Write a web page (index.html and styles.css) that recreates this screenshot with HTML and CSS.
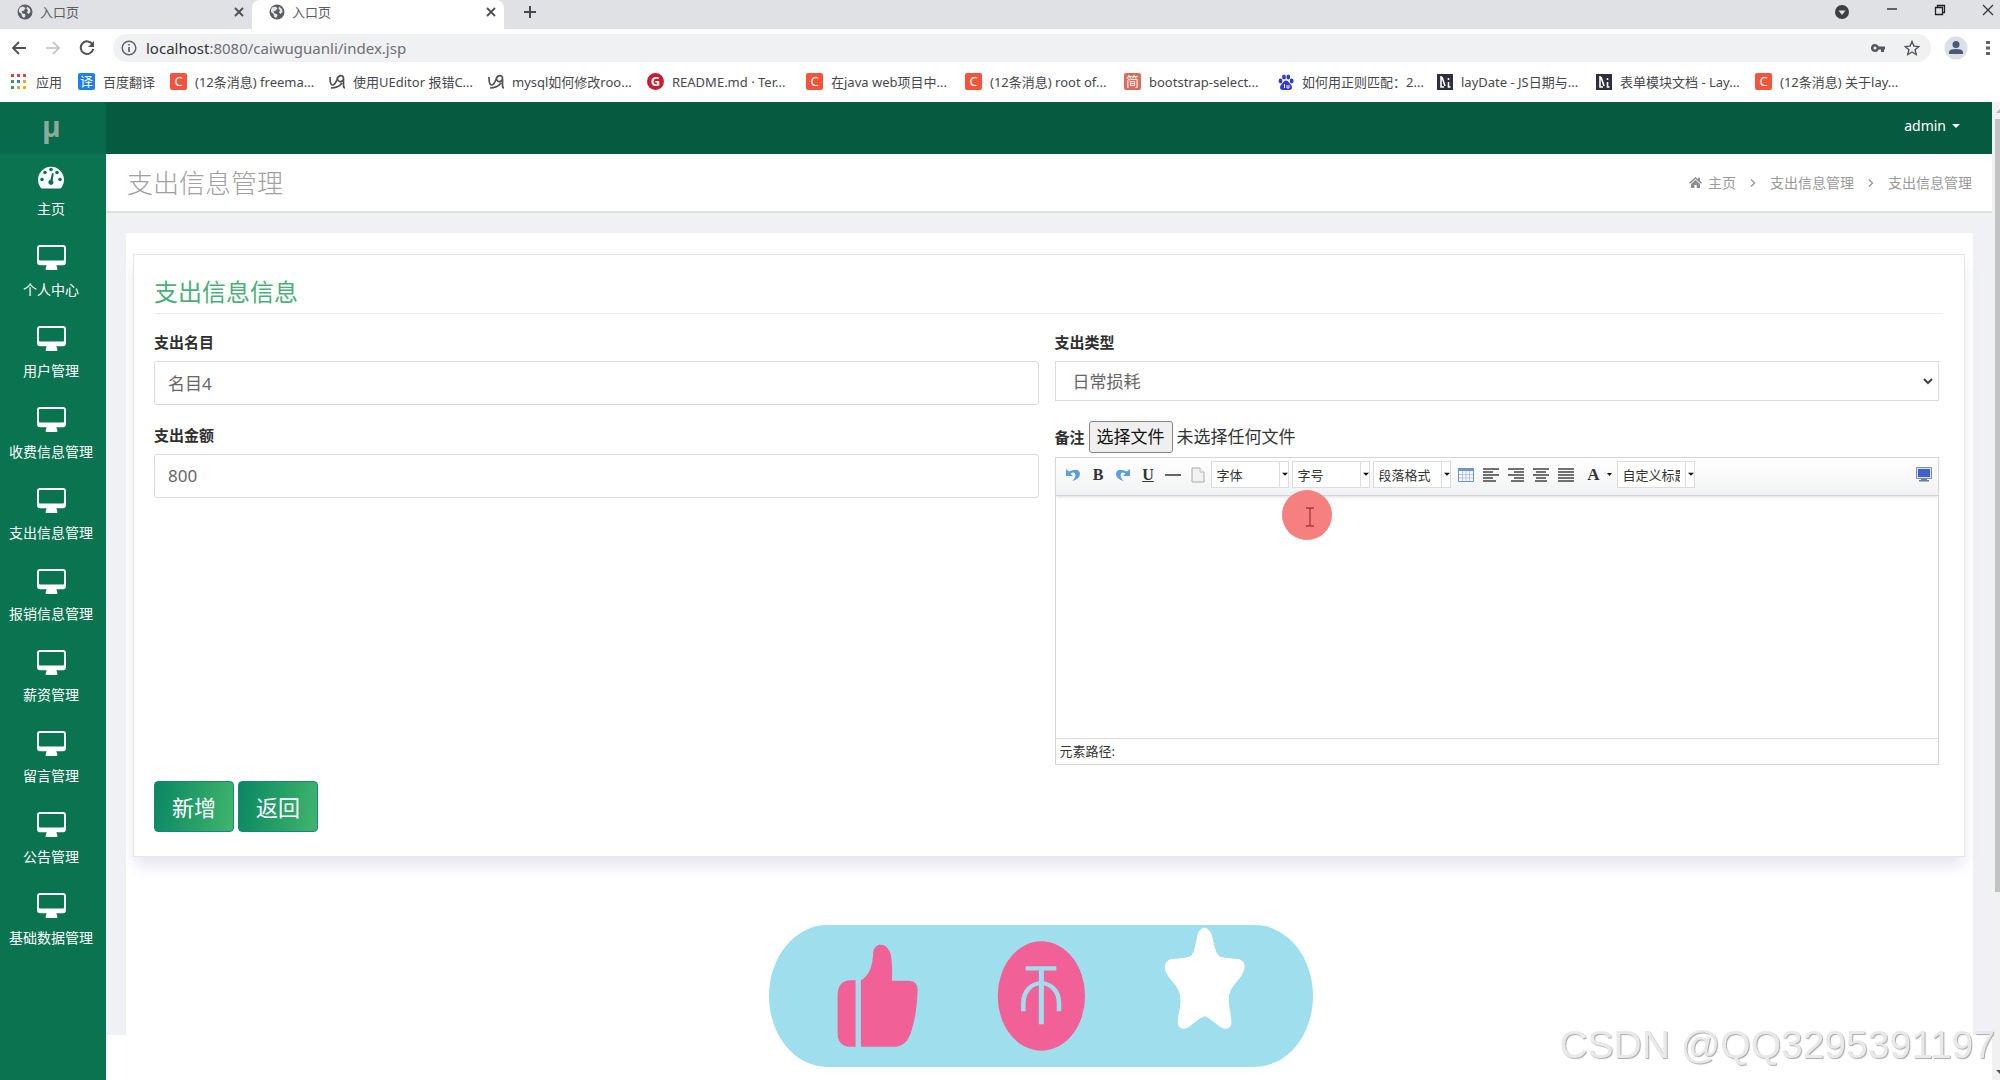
FILE: index.html
```html
<!DOCTYPE html>
<html lang="zh-CN">
<head>
<meta charset="utf-8">
<title>入口页</title>
<link rel="stylesheet" href="styles.css">
</head>
<body>
<svg class="defs" aria-hidden="true">
  <symbol id="globe" viewBox="0 0 16 16"><circle cx="8" cy="8" r="7.5" fill="#5a5d61"/><path d="M3 3.500L6 2.500 8.500 4 7 6.500 4.500 7.500 5.500 9.500 8 10 8.500 12 7 14 5 12.500 4.500 10 2 8 2 5.500zM10 2.500L13 5 13.500 8 11.500 10 10 8.500 11 6 9.500 5z" fill="#e4e6e9"/></symbol>
  <symbol id="close" viewBox="0 0 10 10"><path d="M1 1l8 8M9 1l-8 8" stroke="#4c4f54" stroke-width="1.800" fill="none"/></symbol>
  <symbol id="monitor" viewBox="0 0 30 26"><path fill-rule="evenodd" d="M3 0h24q3 0 3 3v15q0 3-3 3h-7l1 3v2H9v-2l1-3H3q-3 0-3-3V3q0-3 3-3zM3 2q-1 0-1 1v12q0 1 1 1h24q1 0 1-1V3q0-1-1-1z" fill="#fff"/></symbol>
  <symbol id="bird" viewBox="0 0 16 16"><path d="M1 3c0 3 0 8 2.500 8S7 8 8 5.500C9 1 14.500 0 14.500 4.500c0 4-5.500 4-5.500 1M14.500 4v7c0 2 0 3 1.500 3M2 14c4 0 8-1 11-5" fill="none" stroke="#4d4f52" stroke-width="1.700"/></symbol>
</svg>

<header class="browser">
  <div class="tabs">
    <div class="tab"><svg class="ico16"><use href="#globe"/></svg><span>入口页</span><button class="plain" aria-label="关闭"><svg class="ico10"><use href="#close"/></svg></button></div>
    <div class="tab active"><svg class="ico16"><use href="#globe"/></svg><span>入口页</span><button class="plain" aria-label="关闭"><svg class="ico10"><use href="#close"/></svg></button></div>
    <button class="plain newtab" aria-label="新标签页"><svg width="14" height="14" viewBox="0 0 14 14"><path d="M7 1v12M1 7h12" stroke="#45484c" stroke-width="2"/></svg></button>
    <div class="window-controls">
      <svg width="16" height="16" viewBox="0 0 16 16"><circle cx="8" cy="8" r="7" fill="#3c4043"/><path d="M4.500 6.500h7L8 11z" fill="#dfe1e5"/></svg>
      <button class="plain" aria-label="最小化"><svg width="12" height="12" viewBox="0 0 12 12"><path d="M1 5h10" stroke="#222" stroke-width="1.300"/></svg></button>
      <button class="plain" aria-label="还原"><svg width="12" height="12" viewBox="0 0 12 12"><path d="M1.500 3.500h7v7h-7zM3.500 3.500v-2h7v7h-2" fill="none" stroke="#222" stroke-width="1.300"/></svg></button>
      <button class="plain" aria-label="关闭窗口"><svg width="12" height="12" viewBox="0 0 12 12"><path d="M1 1l10 10M11 1L1 11" stroke="#333" stroke-width="1.200"/></svg></button>
    </div>
  </div>

  <div class="toolbar">
    <button class="plain" aria-label="后退"><svg width="16" height="16" viewBox="0 0 16 16"><path d="M15 8H2M8 2L2 8l6 6" fill="none" stroke="#4f5257" stroke-width="1.900"/></svg></button>
    <button class="plain" aria-label="前进"><svg width="16" height="16" viewBox="0 0 16 16"><path d="M1 8h13M8 2l6 6-6 6" fill="none" stroke="#bcbec2" stroke-width="1.600"/></svg></button>
    <button class="plain" aria-label="重新加载"><svg width="16" height="16" viewBox="0 0 16 16"><path d="M13.500 4.500A6.300 6.300 0 1 0 14.200 9" fill="none" stroke="#4f5257" stroke-width="2"/><path d="M15 1v6H9z" fill="#4f5257"/></svg></button>
    <div class="omnibox">
      <svg width="16" height="16" viewBox="0 0 16 16"><circle cx="8" cy="8" r="6.800" fill="none" stroke="#5f6368" stroke-width="1.500"/><path d="M8 7v5M8 4v1.600" stroke="#5f6368" stroke-width="1.700"/></svg>
      <span class="url"><b>localhost</b>:8080/caiwuguanli/index.jsp</span>
      <svg width="16" height="16" viewBox="0 0 16 16"><path fill-rule="evenodd" d="M5 4a4 4 0 0 1 3.700 2.500H15v3h-1v2.500h-3V9.500H8.700A4 4 0 1 1 5 4zm0 2.500a1.500 1.500 0 1 0 0 3 1.500 1.500 0 0 0 0-3z" fill="#54575b"/></svg>
      <svg width="16" height="16" viewBox="0 0 16 16"><path d="M8 1.500l1.900 4.600 4.900.4-3.700 3.200 1.100 4.800L8 12l-4.200 2.500 1.100-4.800L1.200 6.500l4.900-.4z" fill="none" stroke="#54575b" stroke-width="1.400"/></svg>
    </div>
    <svg class="avatar" width="24" height="24" viewBox="0 0 24 24"><circle cx="12" cy="12" r="11.500" fill="#dcdfe8"/><circle cx="12" cy="8.500" r="3.500" fill="#4e5875"/><path d="M5 18v-2q0-3 7-3t7 3v2z" fill="#4e5875"/></svg>
    <button class="plain" aria-label="菜单"><svg width="4" height="16" viewBox="0 0 4 16"><path d="M0 1h4v3H0zM0 6.500h4v3H0zM0 12h4v3H0z" fill="#5f6368"/></svg></button>
  </div>

  <nav class="bookmarks">
    <a class="apps" href="#"><svg width="15" height="15" viewBox="0 0 15 15"><path d="M0 0h3v3H0zM6 0h3v3H6zM12 0h3v3h-3z" fill="#d5473b"/><path d="M0 6h3v3H0z" fill="#3f9b56"/><path d="M6 6h3v3H6z" fill="#3f7de0"/><path d="M12 6h3v3h-3zM6 12h3v3H6zM12 12h3v3h-3z" fill="#e9ae23"/><path d="M0 12h3v3H0z" fill="#3f9b56"/></svg><span>应用</span></a>
    <a class="short" href="#"><i class="fav blue">译</i><span>百度翻译</span></a>
    <a href="#"><i class="fav orange">C</i><span>(12条消息) freema...</span></a>
    <a href="#"><svg class="ico16"><use href="#bird"/></svg><span>使用UEditor 报错C...</span></a>
    <a href="#"><svg class="ico16"><use href="#bird"/></svg><span>mysql如何修改roo...</span></a>
    <a href="#"><i class="fav red">G</i><span>README.md · Ter...</span></a>
    <a href="#"><i class="fav orange">C</i><span>在java web项目中...</span></a>
    <a href="#"><i class="fav orange">C</i><span>(12条消息) root of...</span></a>
    <a class="narrow" href="#"><i class="fav salmon">简</i><span>bootstrap-select...</span></a>
    <a href="#"><svg class="ico16" viewBox="0 0 16 16"><g fill="#3138d6"><ellipse cx="2.500" cy="7" rx="1.900" ry="2.400"/><ellipse cx="6" cy="3" rx="1.900" ry="2.600"/><ellipse cx="10.300" cy="3" rx="1.900" ry="2.600"/><ellipse cx="13.700" cy="7" rx="1.900" ry="2.400"/><path d="M8 6.500q2 0 3 2l2.500 3q1.500 4-2 4.500H4.500q-3.500-.5-2-4.500L5 8.500q1-2 3-2z"/></g><path d="M6.500 10v4M9 11v3h2v-3" stroke="#fff" fill="none"/></svg><span>如何用正则匹配：2...</span></a>
    <a href="#"><svg class="ico16" viewBox="0 0 16 16"><path d="M0 0h16v16H0z" fill="#2b303b"/><path d="M4 2v11h3M5 3l3 9M11.500 4v2M11.500 8v5h2" stroke="#fff" stroke-width="1.600" fill="none"/></svg><span>layDate - JS日期与...</span></a>
    <a href="#"><svg class="ico16" viewBox="0 0 16 16"><path d="M0 0h16v16H0z" fill="#2b303b"/><path d="M4 2v11h3M5 3l3 9M11.500 4v2M11.500 8v5h2" stroke="#fff" stroke-width="1.600" fill="none"/></svg><span>表单模块文档 - Lay...</span></a>
    <a href="#"><i class="fav orange">C</i><span>(12条消息) 关于lay...</span></a>
  </nav>
</header>

<div class="app">
  <aside class="sidebar">
    <a class="logo" href="#">µ</a>
    <nav>
      <a href="#"><svg width="28" height="24" viewBox="0 0 28 24"><path d="M3.500 23a13 13 0 1 1 21 0q-.5 1-2 1h-17q-1.500 0-2-1z" fill="#fff"/><g fill="#0a7350"><circle cx="5" cy="15" r="1.800"/><circle cx="8" cy="8" r="1.800"/><circle cx="14" cy="5" r="1.800"/><circle cx="20" cy="8" r="1.800"/><circle cx="23" cy="15" r="1.800"/><path d="M15 8.500l1.700.5-1 7q1.500 1.500.4 3.300-1.600 1.900-3.800.5-2-2 0-4l1.100-.6z"/></g></svg><span>主页</span></a>
      <a href="#"><svg width="29" height="25"><use href="#monitor"/></svg><span>个人中心</span></a>
      <a href="#"><svg width="29" height="25"><use href="#monitor"/></svg><span>用户管理</span></a>
      <a href="#"><svg width="29" height="25"><use href="#monitor"/></svg><span>收费信息管理</span></a>
      <a href="#"><svg width="29" height="25"><use href="#monitor"/></svg><span>支出信息管理</span></a>
      <a href="#"><svg width="29" height="25"><use href="#monitor"/></svg><span>报销信息管理</span></a>
      <a href="#"><svg width="29" height="25"><use href="#monitor"/></svg><span>薪资管理</span></a>
      <a href="#"><svg width="29" height="25"><use href="#monitor"/></svg><span>留言管理</span></a>
      <a href="#"><svg width="29" height="25"><use href="#monitor"/></svg><span>公告管理</span></a>
      <a href="#"><svg width="29" height="25"><use href="#monitor"/></svg><span>基础数据管理</span></a>
    </nav>
  </aside>

  <div class="page">
    <div class="topbar"><button class="plain user">admin <svg width="8" height="4" viewBox="0 0 8 4"><path d="M0 0h8L4 4z" fill="#fff"/></svg></button></div>
    <div class="titlebar">
      <h1>支出信息管理</h1>
      <nav class="crumbs">
        <a href="#"><svg width="13" height="11" viewBox="0 0 13 11"><path d="M6.500 0L9 2.200V.8h2v3l2 1.900-1 1-5.500-4.800L1 6.700l-1-1zM6.500 3L11 7v4H7.700V8H5.300v3H2V7z" fill="#8d8d8d"/></svg>主页</a>
        <svg class="sep" width="6" height="8" viewBox="0 0 6 8"><path d="M1 .5L4.500 4 1 7.500" fill="none" stroke="#999" stroke-width="1.400"/></svg>
        <a href="#">支出信息管理</a>
        <svg class="sep" width="6" height="8" viewBox="0 0 6 8"><path d="M1 .5L4.500 4 1 7.500" fill="none" stroke="#999" stroke-width="1.400"/></svg>
        <span>支出信息管理</span>
      </nav>
    </div>

    <main class="content">
      <div class="sheet">
        <section class="card">
          <h2>支出信息信息</h2>
          <form class="form">
            <div class="col">
              <label class="caption" for="name">支出名目</label>
              <input class="field" id="name" type="text" value="名目4">
              <label class="caption" for="amount">支出金额</label>
              <input class="field" id="amount" type="text" value="800">
            </div>
            <div class="col">
              <label class="caption" for="kind">支出类型</label>
              <select class="field kind" id="kind"><option>日常损耗</option></select>
              <div class="upload">
                <span class="note">备注</span>
                <input class="hidden-file" id="file" type="file">
                <label class="file-button" for="file">选择文件</label>
                <span class="file-name">未选择任何文件</span>
              </div>
              <div class="editor">
                <div class="tools">
                  <button type="button" class="tool" aria-label="撤销"><svg width="16" height="16" viewBox="0 0 16 16"><path d="M1 2v7h7L5.500 6.500Q10 4 10.500 8q0 3-3 6Q15 12 15 6.500 14 0 4 4.500z" fill="#5b9fd8"/></svg></button>
                  <button type="button" class="tool serif">B</button>
                  <button type="button" class="tool" aria-label="重做"><svg width="16" height="16" viewBox="0 0 16 16"><path d="M15 2v7H8l2.500-2.500Q6 4 5.500 8q0 3 3 6Q1 12 1 6.500 2 0 12 4.500z" fill="#5b9fd8"/></svg></button>
                  <button type="button" class="tool serif under">U</button>
                  <button type="button" class="tool" aria-label="分隔线"><svg width="16" height="16" viewBox="0 0 16 16"><path d="M0 8h16" stroke="#333" stroke-width="1.500"/></svg></button>
                  <button type="button" class="tool" aria-label="清空文档"><svg width="14" height="16" viewBox="0 0 14 16"><path d="M1 1h8l4 4v10H1z" fill="#f2f2f2" stroke="#aaa"/><path d="M9 1v4h4" fill="#fff" stroke="#bbb"/></svg></button>
                  <select class="combo" aria-label="字体"><option>字体</option></select>
                  <select class="combo" aria-label="字号"><option>字号</option></select>
                  <select class="combo" aria-label="段落格式"><option>段落格式</option></select>
                  <button type="button" class="tool" aria-label="表格"><svg width="16" height="14" viewBox="0 0 16 14"><path d="M.5.5h15v13H.5z" fill="#f6f9ff" stroke="#6f93cf"/><path d="M0 0h16v3H0z" fill="#6f93cf"/><path d="M1 6.500h14M1 10h14M4.500 3v10M8 3v10M11.500 3v10" stroke="#b4c6e6"/></svg></button>
                  <button type="button" class="tool" aria-label="左对齐"><svg width="16" height="14" viewBox="0 0 16 14"><path d="M0 1h16M0 4h10M0 7h16M0 10h10M0 13h13" stroke="#444" stroke-width="1.400"/></svg></button>
                  <button type="button" class="tool" aria-label="右对齐"><svg width="16" height="14" viewBox="0 0 16 14"><path d="M0 1h16M6 4h10M0 7h16M6 10h10M3 13h13" stroke="#444" stroke-width="1.400"/></svg></button>
                  <button type="button" class="tool" aria-label="居中"><svg width="16" height="14" viewBox="0 0 16 14"><path d="M0 1h16M3 4h10M0 7h16M3 10h10M2 13h12" stroke="#444" stroke-width="1.400"/></svg></button>
                  <button type="button" class="tool" aria-label="两端对齐"><svg width="16" height="14" viewBox="0 0 16 14"><path d="M0 1h16M0 4h16M0 7h16M0 10h16M0 13h16" stroke="#444" stroke-width="1.400"/></svg></button>
                  <button type="button" class="tool serif color">A<svg width="5" height="3" viewBox="0 0 5 3"><path d="M0 0h5L2.500 3z" fill="#111"/></svg></button>
                  <select class="combo" aria-label="自定义标题"><option>自定义标题</option></select>
                  <button type="button" class="tool full" aria-label="全屏"><svg width="16" height="15" viewBox="0 0 16 15"><path d="M.5.5h15v11H.5z" fill="#dbe2f2" stroke="#7a8fb5"/><path d="M2 2h12v8H2z" fill="#3f62c9"/><path d="M5 12h6v1h2v1.500H3V13h2z" fill="#6b7f93"/></svg></button>
                </div>
                <textarea class="area" aria-label="备注内容"></textarea>
                <div class="path">元素路径:</div>
                <svg class="pointer" viewBox="0 0 50 50"><circle cx="25" cy="25" r="25" fill="#f67f7f"/><path d="M24 18h3l1 1 1-1h3M28 19v16M24 36h3l1-1 1 1h3" fill="none" stroke="#a23a3e" stroke-width="1.300"/></svg>
              </div>
            </div>
            <div class="actions">
              <button type="button" class="btn">新增</button>
              <button type="button" class="btn">返回</button>
            </div>
          </form>
        </section>
      </div>
    </main>
  </div>

  <div class="scrollbar" aria-hidden="true">
    <svg width="8" height="17" viewBox="0 0 8 17"><path d="M4 11l4-4v4z" fill="#b5b5b5"/></svg>
    <div class="thumb"></div>
    <svg width="8" height="17" viewBox="0 0 8 17"><path d="M4 7h4v4z" fill="#555"/></svg>
  </div>
</div>

<svg class="praise" viewBox="76 74 1420 426" preserveAspectRatio="none" aria-hidden="true">
  <rect x="76" y="74" width="1420" height="426" rx="152" ry="213" fill="#9fdfed"/>
  <path d="M302 240v199h-18q-29-4-29-42V284q1-44 35-44zM316 240c20-12 31-40 32-85 4-28 36-32 46 8q5 30 3 78h46q20 2 21 26c-1 50-7 98-20 137q-11 31-35 35h-93z" fill="#f26098"/>
  <ellipse cx="787" cy="287" rx="114" ry="164" fill="#f26098"/>
  <path d="M746 204h80M787 204v168" fill="none" stroke="#9fdfed" stroke-width="13"/>
  <path d="M740 333v-24c0-80 93-80 93 0v24" fill="none" stroke="#9fdfed" stroke-width="12"/>
  <path d="M1197 96q15-28 32 0c9 25 10 66 25 73 15 5 34 4 50 8q19 8 11 36c-11 32-37 42-39 81-1 26 8 52 7 75-3 20-18 20-30 10-13-10-27-26-40-31-13 5-27 21-40 31-13 10-28 8-30-10-1-23 9-49 7-75-2-39-27-49-39-81q-7-28 13-36c16-4 36-3 50-8 15-9 15-48 23-73z" fill="#fff"/>
</svg>
<div class="watermark">CSDN @QQ3295391197</div>
</body>
</html>
```

FILE: styles.css
```css
* { box-sizing: border-box; }

body {
  margin: 0;
  min-height: 100vh;
  display: flex;
  flex-direction: column;
  background: #fff;
  color: #333;
  font: 14px/20px "Noto Sans", "Noto Sans CJK SC", sans-serif;
}

a { color: inherit; text-decoration: none; }
svg { display: block; flex: none; }
.defs { display: none; }
.ico16 { width: 16px; height: 16px; }
.ico10 { width: 10px; height: 10px; }

.plain {
  display: flex;
  align-items: center;
  padding: 0;
  border: 0;
  background: none;
  font: inherit;
  color: inherit;
}

/* Browser chrome */
.tabs {
  display: flex;
  height: 29px;
  padding-bottom: 6px;
  align-items: center;
  background: #dfe1e5;
  font-size: 13px;
  color: #5a5d61;
}
.tab {
  display: flex;
  align-items: center;
  gap: 7px;
  width: 252px;
  height: 29px;
  margin-bottom: -6px;
  padding: 0 8px 6px 17px;
}
.tab span { flex: 1; }
.tab.active { background: #fff; border-radius: 8px 8px 0 0; }
.newtab { margin-left: 19px; }
.window-controls {
  display: flex;
  align-items: flex-start;
  gap: 36px;
  margin-left: auto;
  padding-right: 6px;
}

.toolbar {
  display: flex;
  align-items: center;
  gap: 18px;
  padding: 5px 10px 5px 11px;
}
.omnibox {
  flex: 1;
  display: flex;
  align-items: center;
  gap: 18px;
  height: 28px;
  padding: 0 11px 0 8px;
  border-radius: 14px;
  background: #f0f1f3;
  color: #6c6f73;
  font-size: 15px;
}
.url { flex: 1; margin-left: -9px; }
.url b { font-weight: 400; color: #303236; }
.avatar { margin-left: -5px; }

.bookmarks {
  display: flex;
  align-items: center;
  height: 35px;
  padding: 0 0 6px 11px;
  font-size: 13px;
  color: #46484c;
  overflow: hidden;
}
.bookmarks a {
  flex: none;
  width: 159px;
  display: flex;
  align-items: center;
  gap: 8px;
  white-space: nowrap;
}
.bookmarks .apps { width: 67px; gap: 10px; }
.bookmarks .short { width: 92px; }
.bookmarks .narrow { width: 154px; }
.fav {
  width: 17px;
  height: 17px;
  border-radius: 2px;
  color: #fff;
  font-style: normal;
  font-size: 13px;
  line-height: 17px;
  text-align: center;
}
.blue { background: #1f7fe8; }
.orange { background: #f3543b; }
.salmon { background: #dd6b58; }
.red { background: #c71d2e; border-radius: 50%; font-weight: 700; }

/* Application shell */
.app { flex: 1; display: flex; }

.sidebar {
  width: 106px;
  background: #0a7350;
  color: #fff;
}
.logo {
  display: block;
  height: 52px;
  padding-right: 3px;
  background: #076a4a;
  color: #8fa89c;
  font-size: 28px;
  font-weight: 700;
  line-height: 48px;
  text-align: center;
}
.sidebar nav a {
  display: flex;
  flex-direction: column;
  align-items: center;
  gap: 10px;
  height: 81px;
  padding: 10px 4px 0 0;
  white-space: nowrap;
}
.sidebar nav svg { height: 25px; }

.page { flex: 1; display: flex; flex-direction: column; min-width: 0; }
.topbar {
  display: flex;
  align-items: center;
  justify-content: flex-end;
  height: 52px;
  padding: 0 32px 4px 0;
  background: #055a3f;
  color: #fff;
}
.user { gap: 6px; }
.titlebar {
  display: flex;
  align-items: center;
  justify-content: space-between;
  height: 59px;
  padding: 0 20px 0 21px;
  border-bottom: 2px solid #dddfe3;
}
h1 {
  margin: 0;
  color: #a0a0a0;
  font-size: 26px;
  font-weight: 300;
  line-height: 36px;
}
.crumbs {
  display: flex;
  align-items: center;
  gap: 14px;
  color: #999;
}
.crumbs a { display: flex; align-items: center; gap: 6px; }

.content {
  flex: 1;
  display: flex;
  margin-bottom: 45px;
  padding: 20px 19px 0 20px;
  background: #f0f1f4;
}
.sheet { flex: 1; padding: 21px 8px 0 7px; background: #fff; }
.card {
  padding: 20px 21px 24px 20px;
  border: 1px solid #e6e7ea;
  background: #fff;
  box-shadow: 0 10px 16px -2px #e2e3ee;
}
h2 {
  margin: 0 0 18px;
  padding-bottom: 4px;
  border-bottom: 1px solid #ebebeb;
  color: #4caf7a;
  font-size: 24px;
  font-weight: 400;
  line-height: 34px;
}

.form {
  display: grid;
  grid-template-columns: 1fr 1fr;
  column-gap: 16px;
  row-gap: 16px;
  padding-right: 4px;
}
.col { display: flex; flex-direction: column; min-width: 0; }
.caption, .note {
  color: #2f2f2f;
  font-size: 15px;
  font-weight: 700;
  line-height: 20px;
}
.caption { margin-bottom: 9px; }
.field {
  width: 100%;
  height: 44px;
  margin-bottom: 20px;
  padding: 0 13px 2px;
  border: 1px solid #d9dadc;
  border-radius: 3px;
  background: #fff;
  color: #666;
  font: 17px/24px "Noto Sans", "Noto Sans CJK SC", sans-serif;
}
.kind {
  height: 40px;
  padding: 2px 13px 0 17px;
  border-radius: 0;
  appearance: none;
  background: #fff url("data:image/svg+xml,%3Csvg xmlns='http://www.w3.org/2000/svg' width='10' height='7'%3E%3Cpath d='M1 1l4 4 4-4' fill='none' stroke='%23444' stroke-width='2'/%3E%3C/svg%3E") no-repeat right 5px center;
}

.upload {
  display: flex;
  align-items: center;
  gap: 4px;
  margin-bottom: 4px;
  font-size: 17px;
}
.hidden-file { position: absolute; width: 1px; height: 1px; opacity: 0; }
.file-button {
  height: 32px;
  padding: 0 7px;
  border: 1px solid #858585;
  border-radius: 3px;
  background: #efefef;
  color: #111;
  line-height: 30px;
}

.editor {
  position: relative;
  display: flex;
  flex-direction: column;
  border: 1px solid #d4d4d4;
}
.tools {
  display: flex;
  align-items: center;
  height: 38px;
  padding: 0 2px 4px 5px;
  border-bottom: 1px solid #d4d4d4;
  background: linear-gradient(#fff, #f1f2f3);
  box-shadow: 0 1px 3px #dcdcdc;
}
.tool {
  display: flex;
  align-items: center;
  justify-content: center;
  flex: none;
  width: 25px;
  height: 24px;
  padding: 0;
  border: 0;
  background: none;
  color: #333;
}
.serif { font: 700 16px/20px "Liberation Serif", serif; }
.under { text-decoration: underline; }
.color { width: 38px; gap: 7px; font-size: 17px; padding-left: 4px; }
.full { margin-left: auto; }
.combo {
  flex: none;
  width: 78px;
  height: 27px;
  margin-right: 3px;
  padding: 0 14px 0 5px;
  border: 1px solid #dcdcdc;
  border-radius: 0;
  appearance: none;
  background: #fff url("data:image/svg+xml,%3Csvg xmlns='http://www.w3.org/2000/svg' width='9' height='26'%3E%3Cpath d='M.5 0v26' stroke='%23ddd'/%3E%3Cpath d='M3 11h6l-3 3z' fill='%23111'/%3E%3C/svg%3E") no-repeat right center;
  color: #333;
  font: 13px/20px "Noto Sans CJK SC", sans-serif;
  text-overflow: clip;
}
.area {
  height: 242px;
  border: 0;
  outline: 0;
  resize: none;
  background: transparent;
  font: inherit;
}
.path {
  height: 26px;
  padding-left: 4px;
  border-top: 1px solid #dcdcdc;
  font-size: 13px;
  line-height: 25px;
}
.pointer {
  position: absolute;
  left: 226px;
  top: 32px;
  width: 50px;
  height: 50px;
}

.actions { grid-column: 1 / -1; display: flex; gap: 4px; }
.btn {
  width: 80px;
  height: 51px;
  padding: 0 0 2px;
  border: 1px solid #168580;
  border-radius: 4px;
  background: linear-gradient(100deg, #0a8763, #40b56c);
  color: #fff;
  font: 22px/30px "Noto Sans CJK SC", sans-serif;
}

.scrollbar {
  width: 8px;
  display: flex;
  flex-direction: column;
  background: #f1f1f2;
}
.thumb { height: 79%; margin-left: 3px; background: #c1c2c4; }
.scrollbar svg:last-child { margin-top: auto; }

/* Overlays above the page */
.praise {
  position: fixed;
  left: 52%;
  bottom: 13px;
  width: 544px;
  height: 142px;
  margin-left: -271px;
}
.watermark {
  position: fixed;
  right: 5px;
  bottom: 11px;
  color: #e9e9e9;
  font: 39px/48px "Liberation Sans", sans-serif;
  text-shadow: 1px 1px 1px #a8a8a8;
}
```
